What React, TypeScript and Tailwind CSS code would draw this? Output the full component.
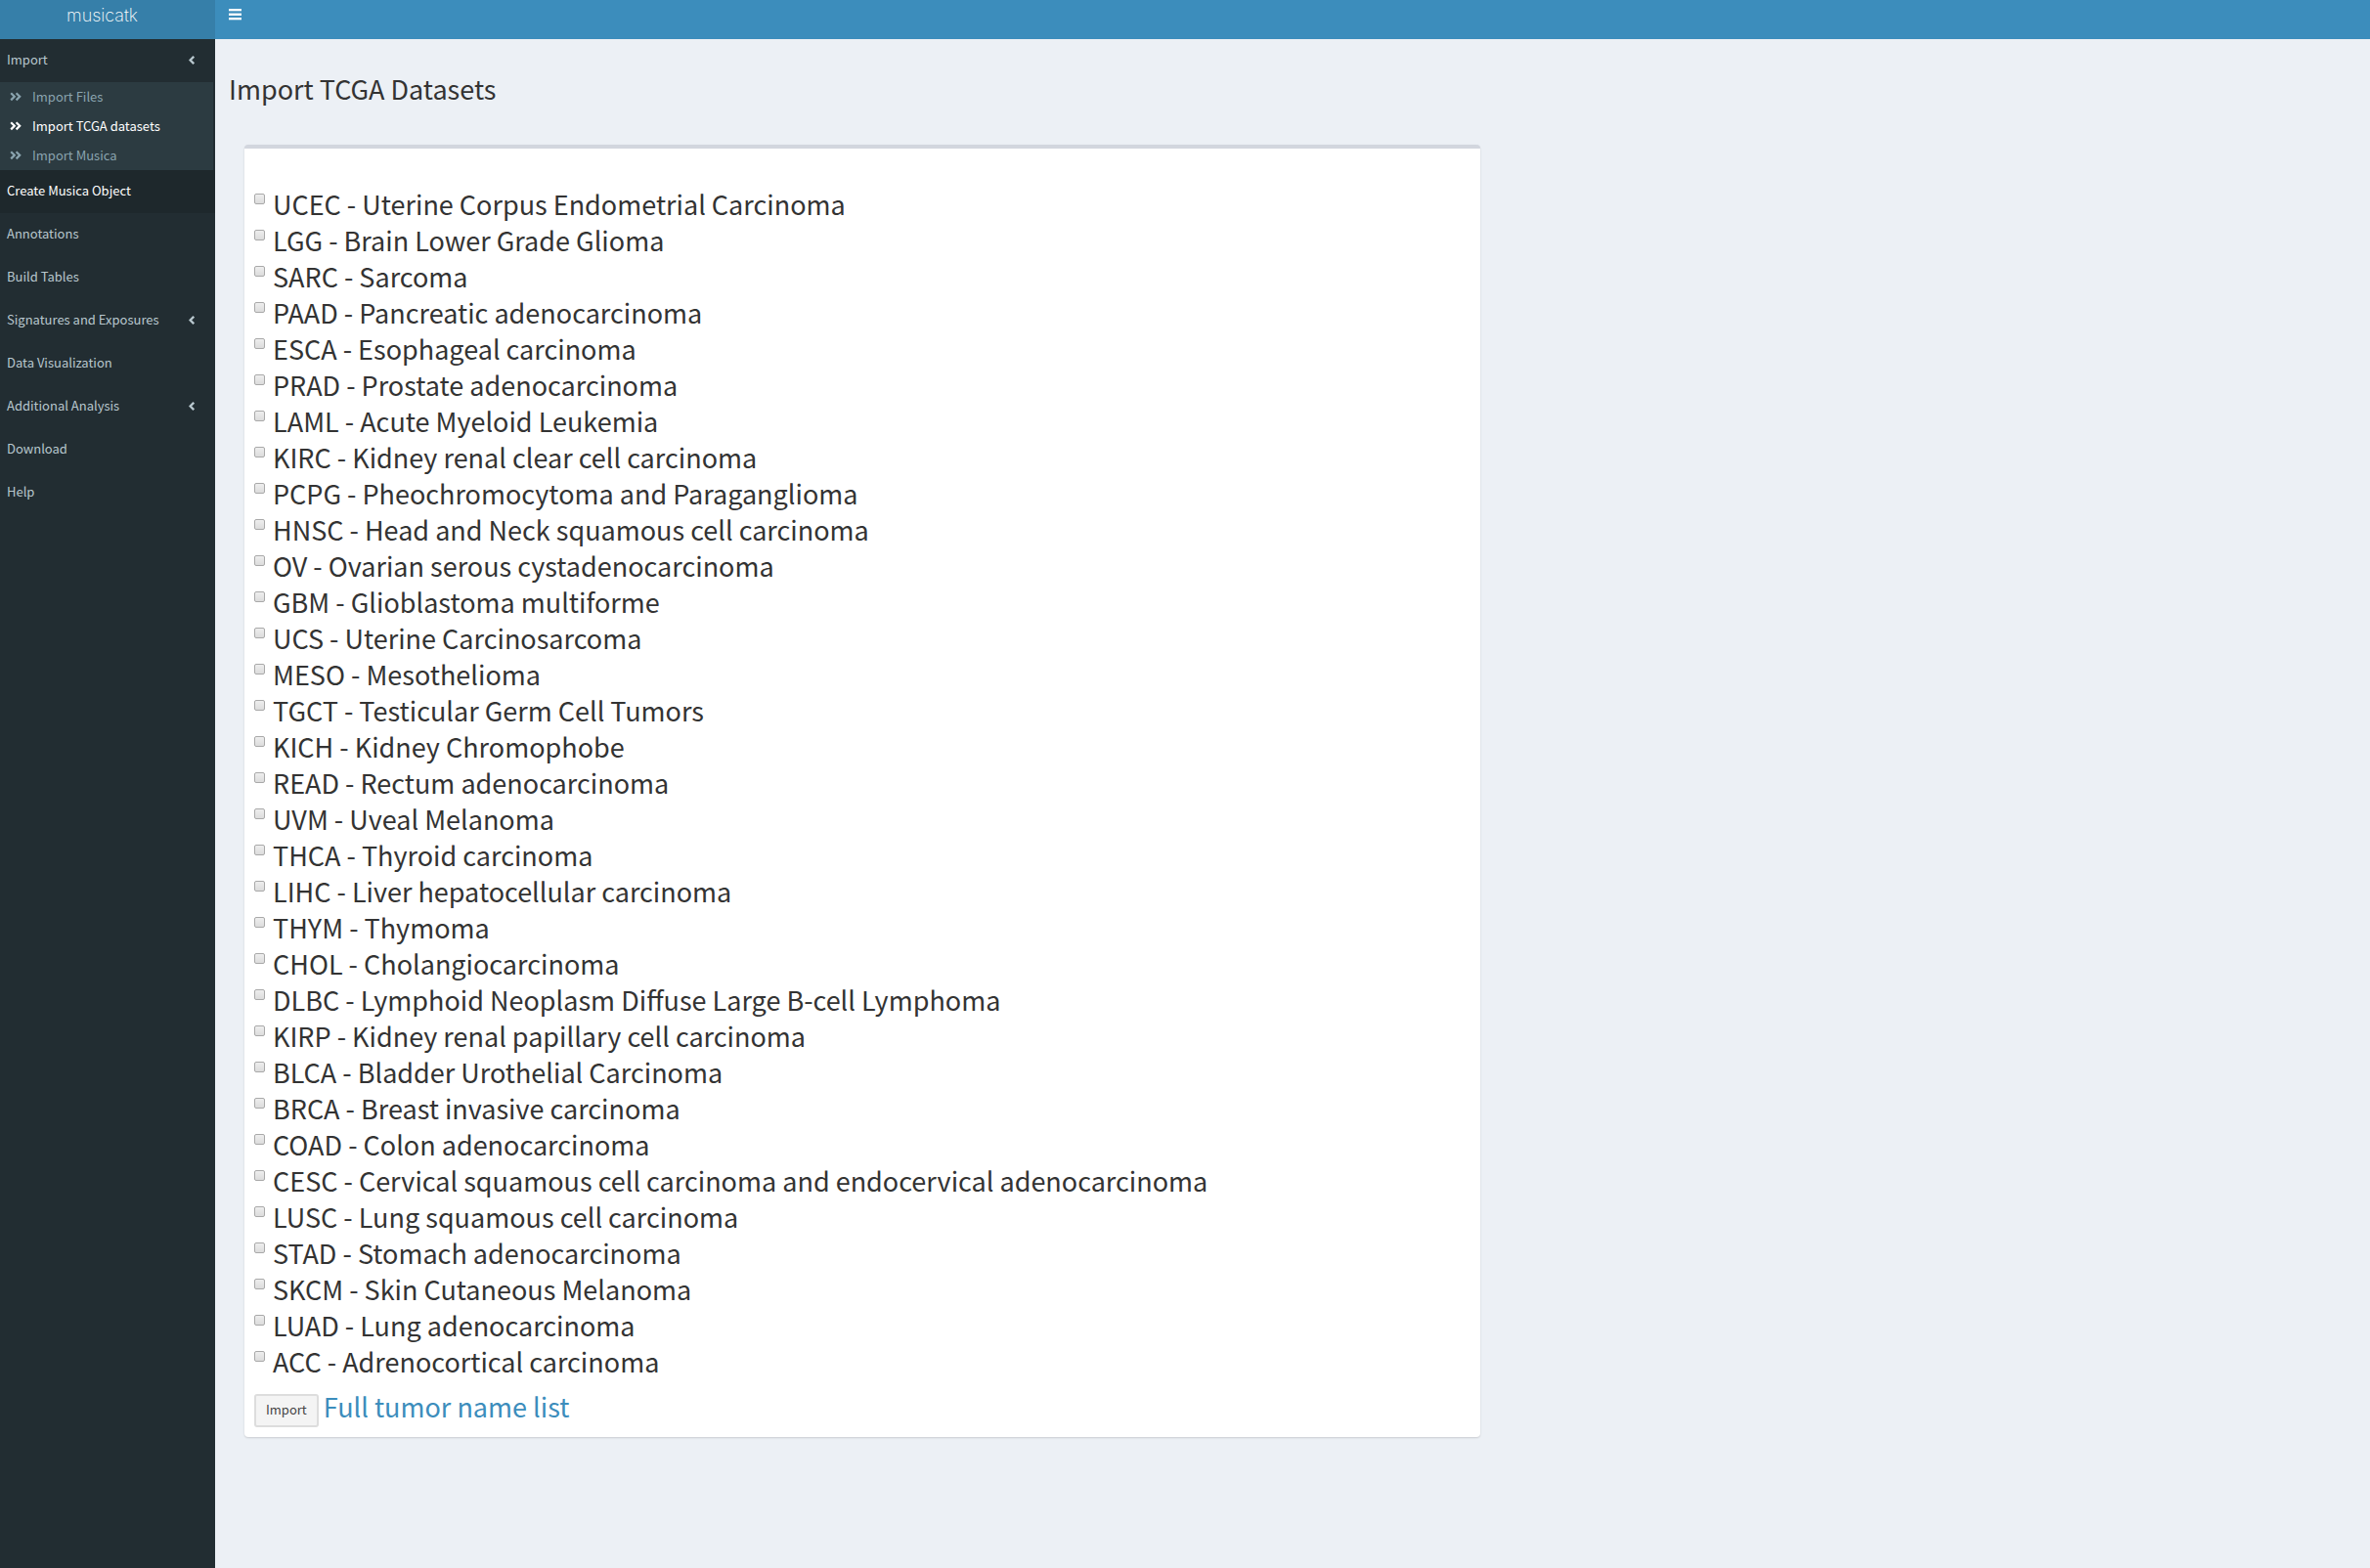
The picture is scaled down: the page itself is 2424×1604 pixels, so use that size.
import React from "react";

const CANCERS = [
  "UCEC - Uterine Corpus Endometrial Carcinoma",
  "LGG - Brain Lower Grade Glioma",
  "SARC - Sarcoma",
  "PAAD - Pancreatic adenocarcinoma",
  "ESCA - Esophageal carcinoma",
  "PRAD - Prostate adenocarcinoma",
  "LAML - Acute Myeloid Leukemia",
  "KIRC - Kidney renal clear cell carcinoma",
  "PCPG - Pheochromocytoma and Paraganglioma",
  "HNSC - Head and Neck squamous cell carcinoma",
  "OV - Ovarian serous cystadenocarcinoma",
  "GBM - Glioblastoma multiforme",
  "UCS - Uterine Carcinosarcoma",
  "MESO - Mesothelioma",
  "TGCT - Testicular Germ Cell Tumors",
  "KICH - Kidney Chromophobe",
  "READ - Rectum adenocarcinoma",
  "UVM - Uveal Melanoma",
  "THCA - Thyroid carcinoma",
  "LIHC - Liver hepatocellular carcinoma",
  "THYM - Thymoma",
  "CHOL - Cholangiocarcinoma",
  "DLBC - Lymphoid Neoplasm Diffuse Large B-cell Lymphoma",
  "KIRP - Kidney renal papillary cell carcinoma",
  "BLCA - Bladder Urothelial Carcinoma",
  "BRCA - Breast invasive carcinoma",
  "COAD - Colon adenocarcinoma",
  "CESC - Cervical squamous cell carcinoma and endocervical adenocarcinoma",
  "LUSC - Lung squamous cell carcinoma",
  "STAD - Stomach adenocarcinoma",
  "SKCM - Skin Cutaneous Melanoma",
  "LUAD - Lung adenocarcinoma",
  "ACC - Adrenocortical carcinoma",
];

function AngleLeft() {
  return (
    <svg viewBox="0 0 6 9" className="h-[9px] w-[6px]" fill="none" stroke="currentColor" strokeWidth="2.3" aria-hidden="true">
      <path d="M5.2 0.8 L1.6 4.5 L5.2 8.2" />
    </svg>
  );
}

function DoubleAngle() {
  return (
    <svg viewBox="0 0 12 10" className="h-[10px] w-[12px]" fill="none" stroke="currentColor" strokeWidth="2.2" aria-hidden="true">
      <path d="M1.2 1.2 L4.8 4.8 L1.2 8.4 M6.6 1.2 L10.2 4.8 L6.6 8.4" />
    </svg>
  );
}

function NavItem({ label, expandable, active }: { label: string; expandable?: boolean; active?: boolean }) {
  return (
    <a
      href="#"
      className={
        "flex h-11 items-center justify-between pb-[2px] pl-[7px] pr-[21px] " +
        (active ? "bg-[#1e282c] text-white" : "text-[#b8c7ce]")
      }
    >
      <span>{label}</span>
      {expandable && <AngleLeft />}
    </a>
  );
}

function SubItem({ label, active }: { label: string; active?: boolean }) {
  return (
    <a href="#" className={"flex h-[30px] items-center gap-[11px] pl-[10px] " + (active ? "text-white" : "text-[#8aa4af]")}>
      <DoubleAngle />
      <span>{label}</span>
    </a>
  );
}

export default function App() {
  return (
    <div className="flex min-h-screen flex-col bg-[#ecf0f5] font-['Noto_Sans_CJK_SC',sans-serif] text-[13px] leading-5 text-[#333]">
      <header className="flex h-10 bg-[#3c8dbc] text-white">
        <a href="#" className="w-[220px] bg-[#367fa9] pr-[11px] text-center font-['Inter',sans-serif] text-[18px] font-extralight leading-8">
          musicatk
        </a>
        <button type="button" aria-label="Toggle navigation" className="h-[30px] px-[14px]">
          <svg viewBox="0 0 13 12" className="h-3 w-[13px]" fill="currentColor" aria-hidden="true">
            <rect x="0" y="0" width="13" height="2.3" />
            <rect x="0" y="4.6" width="13" height="2.3" />
            <rect x="0" y="9" width="13" height="2.3" />
          </svg>
        </button>
      </header>
      <div className="flex flex-1">
        <nav className="w-[220px] shrink-0 bg-[#222d32]">
          <NavItem label="Import" expandable />
          <div className="mr-[2px] bg-[#2c3b41]">
            <SubItem label="Import Files" />
            <SubItem label="Import TCGA datasets" active />
            <SubItem label="Import Musica" />
          </div>
          <NavItem label="Create Musica Object" active />
          <NavItem label="Annotations" />
          <NavItem label="Build Tables" />
          <NavItem label="Signatures and Exposures" expandable />
          <NavItem label="Data Visualization" />
          <NavItem label="Additional Analysis" expandable />
          <NavItem label="Download" />
          <NavItem label="Help" />
        </nav>
        <main className="flex-1 pt-[31px]">
          <h1 className="pl-[14px] text-[27px] leading-10">Import TCGA Datasets</h1>
          <div className="pl-[30px] pr-[7px] pt-[37px]">
            <section className="w-7/12 rounded-[4px] border-t-4 border-[#d2d6de] bg-white px-[10px] pb-[10px] pt-[38px] text-[27px] leading-[37px] shadow-[0_1px_2px_rgba(0,0,0,0.15)]">
              {CANCERS.map((name) => (
                <label key={name} className="flex items-start">
                  <input
                    type="checkbox"
                    className="mr-2 mt-2 size-[11px] shrink-0 appearance-none rounded-[2px] border border-[#a9a9a9] bg-linear-to-b from-[#eeeeee] to-[#dcdcdc] checked:from-[#3c8dbc] checked:to-[#367fa9]"
                  />
                  {name}
                </label>
              ))}
              <div className="flex items-start pt-[9px]">
                <button
                  type="button"
                  className="mr-[5px] mt-[6px] h-[34px] rounded-[3px] border-2 border-[#ddd] bg-[#f4f4f4] px-[10px] pb-[2px] text-[13px] leading-7 text-[#444]"
                >
                  Import
                </button>
                <a href="#" className="text-[#3c8dbc]">
                  Full tumor name list
                </a>
              </div>
            </section>
          </div>
        </main>
      </div>
    </div>
  );
}
